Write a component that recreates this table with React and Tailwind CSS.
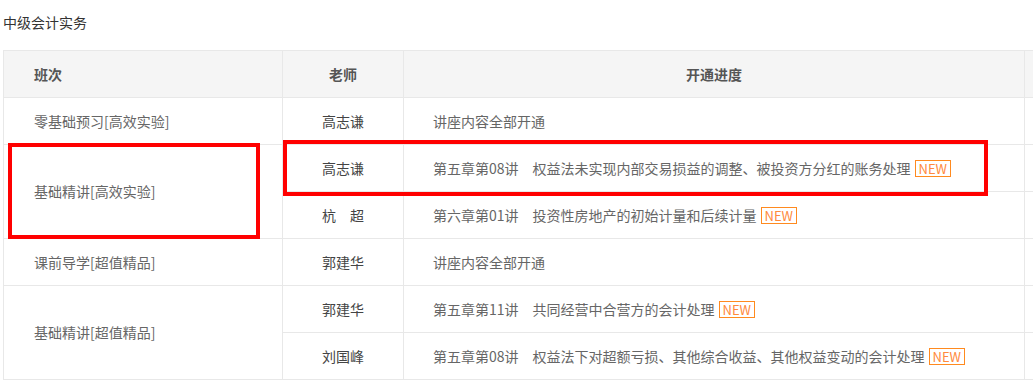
const rows = [
  {
    cls: "零基础预习[高效实验]",
    items: [{ teacher: "高志谦", text: "讲座内容全部开通", isNew: false }],
  },
  {
    cls: "基础精讲[高效实验]",
    items: [
      {
        teacher: "高志谦",
        text: "第五章第08讲　权益法未实现内部交易损益的调整、被投资方分红的账务处理",
        isNew: true,
      },
      {
        teacher: "杭　超",
        text: "第六章第01讲　投资性房地产的初始计量和后续计量",
        isNew: true,
      },
    ],
  },
  {
    cls: "课前导学[超值精品]",
    items: [{ teacher: "郭建华", text: "讲座内容全部开通", isNew: false }],
  },
  {
    cls: "基础精讲[超值精品]",
    items: [
      {
        teacher: "郭建华",
        text: "第五章第11讲　共同经营中合营方的会计处理",
        isNew: true,
      },
      {
        teacher: "刘国峰",
        text: "第五章第08讲　权益法下对超额亏损、其他综合收益、其他权益变动的会计处理",
        isNew: true,
      },
    ],
  },
];

const NewTag = () => (
  <span className="ml-[4px] inline-flex h-[17px] items-center border border-[#ff8a1f] px-[3px] text-[13px] leading-none text-[#ff8a3d]">
    NEW
  </span>
);

const App = () => {
  return (
    <div
      className="relative w-[1033px] h-[382px] overflow-hidden bg-white"
      style={{ fontFamily: '"Microsoft YaHei", "Noto Sans CJK SC", sans-serif' }}
    >
      <p className="pl-[3px] pt-[12px] h-[50px] text-[14px] leading-[20px] text-[#333]">
        中级会计实务
      </p>

      <table className="ml-[3px] w-[1130px] table-fixed border-collapse text-[14px] text-[#666]">
        <colgroup>
          <col className="w-[279px]" />
          <col className="w-[121px]" />
          <col className="w-[621px]" />
          <col />
        </colgroup>
        <thead>
          <tr className="h-[47px] bg-[#f5f5f5]">
            <th className="border border-[#e8e8e8] pl-[30px] text-left font-semibold text-[#555]">
              班次
            </th>
            <th className="border border-[#e8e8e8] text-center font-semibold text-[#555]">
              老师
            </th>
            <th className="border border-[#e8e8e8] text-center font-semibold text-[#555]">
              开通进度
            </th>
            <th className="border border-[#e8e8e8]"></th>
          </tr>
        </thead>
        <tbody>
          {rows.map((row) =>
            row.items.map((item, i) => (
              <tr key={row.cls + i} className="h-[47px]">
                {i === 0 && (
                  <td
                    rowSpan={row.items.length}
                    className="border border-[#e8e8e8] pl-[30px]"
                  >
                    {row.cls}
                  </td>
                )}
                <td className="border border-[#e8e8e8] text-center font-normal text-[#444]">
                  {item.teacher}
                </td>
                <td className="border border-[#e8e8e8] pl-[29px] whitespace-nowrap">
                  {item.text}
                  {item.isNew && <NewTag />}
                </td>
                <td className="border border-[#e8e8e8]"></td>
              </tr>
            ))
          )}
        </tbody>
      </table>

      {/* red highlight boxes */}
      <div className="absolute left-[8px] top-[143px] h-[96px] w-[252px] border-[4px] border-[#ff0000]" />
      <div className="absolute left-[283px] top-[140px] h-[56px] w-[705px] border-[4px] border-[#ff0000]" />
    </div>
  );
};

export default App;
